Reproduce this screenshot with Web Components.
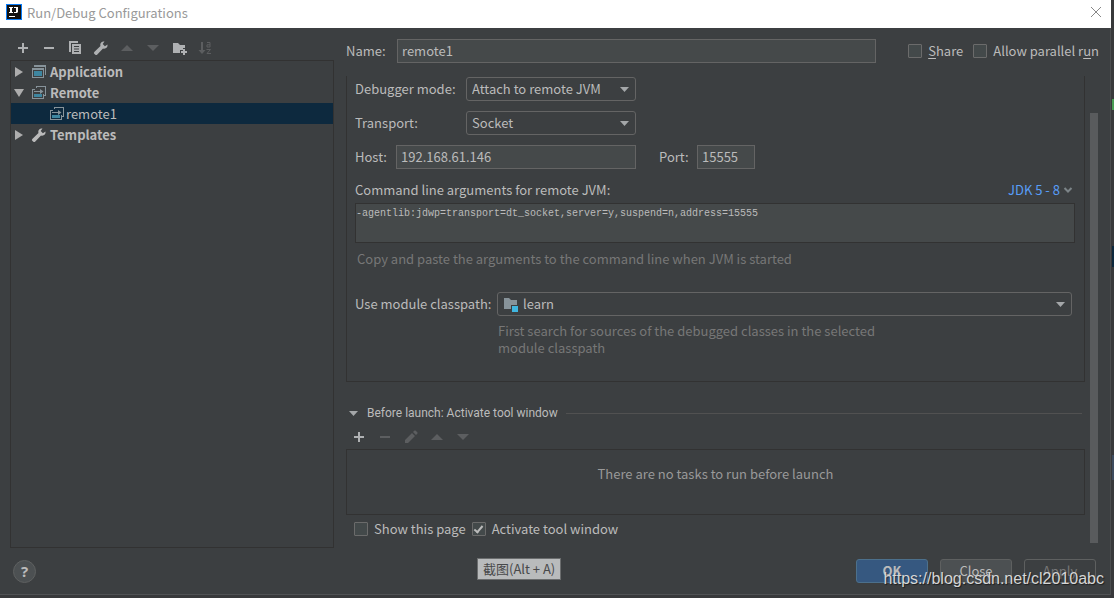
<!DOCTYPE html>
<html lang="en">
<head>
<meta charset="utf-8">
<title>Run/Debug Configurations</title>
<style>
  html, body { margin: 0; }
  body {
    --bg: #3c3f41;
    --text: #bbbbbb;
    --muted: #777777;
    --line: #323232;
    --field: #45494a;
    --field-line: #646464;
    font: 13px/18px "Noto Sans CJK SC", "Noto Sans", sans-serif;
    color: var(--text);
    background: #38393b;
  }
</style>
</head>
<body>
<run-dialog></run-dialog>
<script>
const ICONS = {
  logo: [16, `<rect width="16" height="16" fill="#087cfa"/><rect x="1" y="1" width="14" height="14" fill="#111"/><path d="M3 3h4v1H6v4h1v1H3V8h1V4H3zM8 3h4v5l-1 1H8V8h2V4H8zM3 12h6v1H3z" fill="#fff"/>`],
  close: [12, `<path d="M1 1l10 10M11 1L1 11" stroke="#888" fill="none"/>`],
  add: [16, `<path d="M7 3h2v4h4v2H9v4H7V9H3V7h4z" fill="currentColor"/>`],
  remove: [16, `<path d="M3 7h10v2H3z" fill="currentColor"/>`],
  copy: [16, `<path d="M2 1h9v2H4v9H2zM5 4h9v10H5zM7 6v1h5V6zM7 8.500v1h5v-1zM7 11v1h5v-1z" fill="currentColor" fill-rule="evenodd"/>`],
  wrench: [16, `<path d="M14.500 4.500l-2.600 1.800-2.200-2.200L11.500 1.500C8.500 1 6.700 3.500 7.500 6L1.500 11.700a1.500 1.500 0 0 0 0 2.300l.6.500a1.500 1.500 0 0 0 2.200 0L10 8.500c2.700.8 5-1.200 4.500-4z" fill="currentColor"/>`],
  up: [16, `<path d="M2 11l6-6 6 6z" fill="currentColor"/>`],
  down: [16, `<path d="M2 5h12l-6 6z" fill="currentColor"/>`],
  folder: [16, `<path d="M2 3h5l2 2h5v3h-2v2H9v3H2zM12 9h2v2h2v2h-2v2h-2v-2h-2v-2h2z" fill="currentColor"/>`],
  sort: [16, `<path d="M4 2h2v8h2.500L5 14l-3.500-4H4z" fill="currentColor"/><path d="M10 2.500h3V7h-3V4.800h3M9.500 9.500h4l-3.500 4h4" stroke="currentColor" fill="none"/>`],
  edit: [16, `<path d="M2 11l7-7 3 3-7 7H2zM10 3l1.500-1.500h1L14.500 3.500v1L13 6z" fill="currentColor"/>`],
  closed: [10, `<path d="M1 0l8 5-8 5z" fill="#adadad"/>`],
  open: [10, `<path d="M0 1h10L5 9z" fill="#adadad"/>`],
  arrow: [10, `<path d="M0 3h9L4.500 8z" fill="#a4a7a9"/>`],
  chevron: [10, `<path d="M1.500 3L5 6.500 8.500 3" stroke="#7c8488" stroke-width="2" fill="none"/>`],
  app: [16, `<path d="M3 1h12v10h-1V3H3zM1 4h12v10H1zM2 6v7h10V6z" fill="#87939a" fill-rule="evenodd"/><path d="M3 7h8v5H3z" fill="#3e86a0"/>`],
  remote: [16, `<path d="M5 1h10v10h-2v-1h1V2H6v1H5zM1 4h3v1H2v8h10V9h1v5H1zM3 6h6V4l3.500 2.500L9 9V7H3z" fill="#87939a"/><path d="M3 9h8v3H3z" fill="#3e86a0"/>`],
  module: [16, `<path d="M1 2h5l2 2h6v5H8v4H1z" fill="#87939a"/><path d="M9 10h6v6H9z" fill="#40b6e0"/>`]
};

function define(name, html, ready) {
  const template = document.createElement("template");
  template.innerHTML = html;
  customElements.define(name, class extends HTMLElement {
    connectedCallback() {
      if (this.shadowRoot) return;
      const root = this.attachShadow({ mode: "open" });
      root.append(template.content.cloneNode(true));
      if (ready) ready(root, this);
    }
  });
}

define("ui-icon", `<style>:host{display:inline-flex;flex:none}svg{display:block}</style><span></span>`, (root, host) => {
  const [size, art] = ICONS[host.getAttribute("name")];
  root.querySelector("span").innerHTML = `<svg width="${size}" height="${size}" viewBox="0 0 ${size} ${size}" aria-hidden="true">${art}</svg>`;
});

define("title-bar", `
<style>
  :host{display:flex;align-items:center;gap:5px;height:28px;padding:0 9px 0 6px;background:#fff;color:#999;box-sizing:border-box}
  h1{flex:1;margin:0;font:inherit;padding-bottom:2px}
  ui-icon{padding-bottom:4px}
  button{padding:0;border:0;background:none;display:flex}
</style>
<ui-icon name="logo"></ui-icon><h1><slot></slot></h1>
<button aria-label="Close window"><ui-icon name="close"></ui-icon></button>`);

define("tool-button", `
<style>
  :host{display:block}
  button{display:flex;padding:0;border:0;background:none;color:#afb1b3}
  button:disabled{color:#5c5e60}
</style><button></button>`, (root, host) => {
  const b = root.querySelector("button");
  b.disabled = host.hasAttribute("off");
  b.setAttribute("aria-label", host.getAttribute("label"));
  b.innerHTML = `<ui-icon name="${host.getAttribute("icon")}"></ui-icon>`;
});

define("tool-bar", `<style>:host{display:flex;gap:10px;align-items:center}</style><slot></slot>`);

define("tree-row", `
<style>
  :host{display:flex;align-items:center;gap:3px;height:21px;padding-left:3px;font-weight:bold}
  :host([selected]){background:#0d293e;font-weight:normal;padding-left:38px;gap:1px}
  .twist{width:10px;margin-right:4px;display:flex}
  :host([selected]) .twist{display:none}
  .kind{display:flex}
</style><span class="twist"></span><span class="kind"></span><span class="text"><slot></slot></span>`, (root, host) => {
  const twist = host.getAttribute("twist");
  if (twist) root.querySelector(".twist").innerHTML = `<ui-icon name="${twist}"></ui-icon>`;
  root.querySelector(".kind").innerHTML = `<ui-icon name="${host.getAttribute("icon")}"></ui-icon>`;
});

define("text-field", `
<style>
  :host{display:flex;align-items:center}
  label{width:var(--label,auto);flex:none}
  input{flex:1;min-width:0;width:100%;height:24px;box-sizing:border-box;margin:0;padding:0 4px 2px;border:1px solid var(--field-line);background:var(--field);color:inherit;font:inherit}
</style><label for="f"></label><input id="f" type="text">`, (root, host) => {
  root.querySelector("label").textContent = host.getAttribute("label");
  root.querySelector("input").value = host.getAttribute("value");
});

define("select-field", `
<style>
  :host{display:flex;align-items:center}
  label{width:var(--label,auto);flex:none}
  div{flex:1;display:grid;grid-template-columns:auto 1fr auto;align-items:center}
  select{grid-area:1/1/2/4;appearance:none;width:100%;height:24px;box-sizing:border-box;margin:0;padding:0 20px 0 5px;border:1px solid var(--field-line);border-radius:3px;background:var(--bg);color:inherit;font:inherit}
  .lead{grid-area:1/1;padding-left:6px;pointer-events:none}
  .lead:empty{display:none}
  .arrow{grid-area:1/3;padding-right:6px;pointer-events:none}
  :host([icon]) select{padding-left:25px}
</style><label for="s"></label><div><select id="s"><option></option></select><span class="lead"></span><ui-icon class="arrow" name="arrow"></ui-icon></div>`, (root, host) => {
  root.querySelector("label").textContent = host.getAttribute("label");
  root.querySelector("option").textContent = host.getAttribute("value");
  const icon = host.getAttribute("icon");
  if (icon) root.querySelector(".lead").innerHTML = `<ui-icon name="${icon}" style="display:flex"></ui-icon>`;
});

define("check-box", `
<style>
  :host{display:block}
  label{display:flex;align-items:center;gap:6px;white-space:nowrap}
  input{appearance:none;flex:none;width:14px;height:14px;box-sizing:border-box;margin:0;border:1px solid #6b6b6b;border-radius:1px;background:#43494a;display:grid;place-items:center}
  input:checked::after{content:"";width:3px;height:7px;border:solid #bbb;border-width:0 2px 2px 0;transform:rotate(40deg);margin-bottom:2px}
</style><label><input type="checkbox"><span><slot></slot></span></label>`, (root, host) => {
  root.querySelector("input").checked = host.hasAttribute("checked");
});

define("push-button", `
<style>
  :host{display:block}
  button{width:72px;height:24px;box-sizing:border-box;padding:0;border:1px solid #5e6060;border-radius:3px;background:#4c5052;color:inherit;font:inherit}
  :host([primary]) button{background:#365880;border-color:#4c708c;font-weight:bold}
  button:disabled{background:none;color:var(--muted)}
</style><button><slot></slot></button>`, (root, host) => {
  root.querySelector("button").disabled = host.hasAttribute("off");
});

define("config-tree", `
<style>
  :host{display:flex;flex-direction:column}
  tool-bar{padding:12px 0 4px 5px}
  .tree{flex:1;border:1px solid var(--line)}
</style>
<tool-bar>
  <tool-button icon="add" label="Add"></tool-button>
  <tool-button icon="remove" label="Remove"></tool-button>
  <tool-button icon="copy" label="Copy"></tool-button>
  <tool-button icon="wrench" label="Edit templates"></tool-button>
  <tool-button icon="up" label="Move up" off></tool-button>
  <tool-button icon="down" label="Move down" off></tool-button>
  <tool-button icon="folder" label="New folder"></tool-button>
  <tool-button icon="sort" label="Sort" off></tool-button>
</tool-bar>
<div class="tree">
  <tree-row twist="closed" icon="app">Application</tree-row>
  <tree-row twist="open" icon="remote">Remote</tree-row>
  <tree-row icon="remote" selected>remote1</tree-row>
  <tree-row twist="closed" icon="wrench">Templates</tree-row>
</div>`);

define("remote-settings", `
<style>
  :host{display:block;border:1px solid var(--line);border-top:0;padding:1px 9px 25px 8px}
  .rows{display:flex;flex-direction:column;gap:10px}
  .short{width:281px;--label:111px}
  .host{display:flex;gap:23px}
  .host .short{--label:41px}
  .port{width:96px;--label:38px}
  .head{display:flex;justify-content:space-between;margin-top:12px}
  a{color:#589df6;text-decoration:none;display:flex;align-items:center;gap:3px;padding-right:2px}
  textarea{display:block;width:100%;height:40px;box-sizing:border-box;margin:4px 0 7px;padding:3px 0;resize:none;border:1px solid var(--line);background:var(--field);color:inherit;font:10px/14px "Liberation Mono",monospace}
  p{margin:0;color:var(--muted)}
  .copy{padding-left:2px}
  .module{margin:24px 3px 0 0;--label:142px}
  .note{margin:6px 0 0 143px;max-width:400px;line-height:17px}
</style>
<div class="rows">
  <select-field class="short" label="Debugger mode:" value="Attach to remote JVM"></select-field>
  <select-field class="short" label="Transport:" value="Socket"></select-field>
  <div class="host">
    <text-field class="short" label="Host:" value="192.168.61.146"></text-field>
    <text-field class="port" label="Port:" value="15555"></text-field>
  </div>
</div>
<div class="head"><label for="args">Command line arguments for remote JVM:</label><a href="#">JDK 5 - 8<ui-icon name="chevron"></ui-icon></a></div>
<textarea id="args" readonly spellcheck="false">-agentlib:jdwp=transport=dt_socket,server=y,suspend=n,address=15555</textarea>
<p class="copy">Copy and paste the arguments to the command line when JVM is started</p>
<select-field class="module" label="Use module classpath:" value="learn" icon="module"></select-field>
<p class="note">First search for sources of the debugged classes in the selected module classpath</p>`);

define("before-launch", `
<style>
  :host{display:block;padding-top:22px}
  h2{display:flex;align-items:center;gap:8px;margin:0 3px 7px;font:12px/18px Roboto,sans-serif}
  h2::after{content:"";flex:1;border-top:1px solid #515151}
  tool-bar{padding:0 0 4px 5px}
  .tasks{height:66px;box-sizing:border-box;border:1px solid var(--line);padding-top:15px;text-align:center;color:#999}
  .checks{display:flex;gap:6px;padding:5px 0 0 8px}
</style>
<h2><ui-icon name="arrow"></ui-icon>Before launch: Activate tool window</h2>
<tool-bar>
  <tool-button icon="add" label="Add task"></tool-button>
  <tool-button icon="remove" label="Remove task" off></tool-button>
  <tool-button icon="edit" label="Edit task" off></tool-button>
  <tool-button icon="up" label="Task up" off></tool-button>
  <tool-button icon="down" label="Task down" off></tool-button>
</tool-bar>
<div class="tasks">There are no tasks to run before launch</div>
<div class="checks"><check-box>Show this page</check-box><check-box checked>Activate tool window</check-box></div>`);

define("config-editor", `
<style>
  :host{display:flex;flex-direction:column}
  .name{display:flex;align-items:center;padding-top:11px;margin-bottom:13px}
  text-field{flex:1;--label:51px;margin-right:32px}
  .name check-box + check-box{margin-left:10px}
  u{text-underline-offset:2px}
  .scroll{flex:1;display:flex;gap:5px}
  .content{flex:1;min-width:0}
  .bar{width:8px;margin:37px 1px 5px 0;background:#595b5d}
</style>
<div class="name">
  <text-field label="Name:" value="remote1"></text-field>
  <check-box><u>S</u>hare</check-box><check-box>Allow parallel r<u>u</u>n</check-box>
</div>
<div class="scroll"><div class="content"><remote-settings></remote-settings><before-launch></before-launch></div><div class="bar"></div></div>`);

define("dialog-footer", `
<style>
  :host{display:flex;align-items:center;gap:12px;height:46px;padding:0 14px 0 13px;box-sizing:border-box}
  .help{width:23px;height:23px;padding:0;margin-right:auto;border:1px solid #5e6060;border-radius:50%;background:#4c5052;color:var(--text);font:bold 15px/20px "Noto Sans",sans-serif}
</style>
<button class="help" aria-label="Help">?</button>
<push-button primary>OK</push-button><push-button>Close</push-button><push-button off>Apply</push-button>`);

define("screen-tip", `
<style>:host{display:block;padding:0 5px;border:1px solid #6b6d6e;background:#b9bbbc;color:#48494a;font-size:13px;line-height:20px;white-space:nowrap}</style><slot></slot>`);

define("run-dialog", `
<style>
  :host{display:flex;min-height:100vh;box-sizing:border-box;position:relative;padding:0 3px 3px 0;
    background:
      linear-gradient(#499c54,#499c54) 100% 99px/2px 11px no-repeat,
      linear-gradient(#0d293e,#0d293e) 100% 246px/2px 21px no-repeat,
      linear-gradient(#3d4b5e,#3d4b5e) 100% 455px/2px 25px no-repeat,
      #38393b}
  main{flex:1;display:flex;flex-direction:column;box-sizing:border-box;background:var(--bg);border-right:1px solid #4b4d4f;border-bottom:1px solid #505254;min-width:0}
  title-bar{margin-right:-1px}
  .body{flex:1;display:flex;gap:12px;padding:0 11px 0 10px}
  config-tree{flex:0 0 324px}
  config-editor{flex:1;min-width:0}
  screen-tip{position:absolute;left:477px;bottom:18px}
  .mark{position:absolute;right:10px;bottom:9px;font:16px/20px "Liberation Sans",Arial,sans-serif;color:#d6d6d6;text-shadow:1px 1px 1px #0008}
</style>
<main>
  <title-bar>Run/Debug Configurations</title-bar>
  <div class="body"><config-tree></config-tree><config-editor></config-editor></div>
  <dialog-footer></dialog-footer>
</main>
<screen-tip>截图(Alt + A)</screen-tip>
<div class="mark">https://blog.csdn.net/cl2010abc</div>`);
</script>
</body>
</html>
